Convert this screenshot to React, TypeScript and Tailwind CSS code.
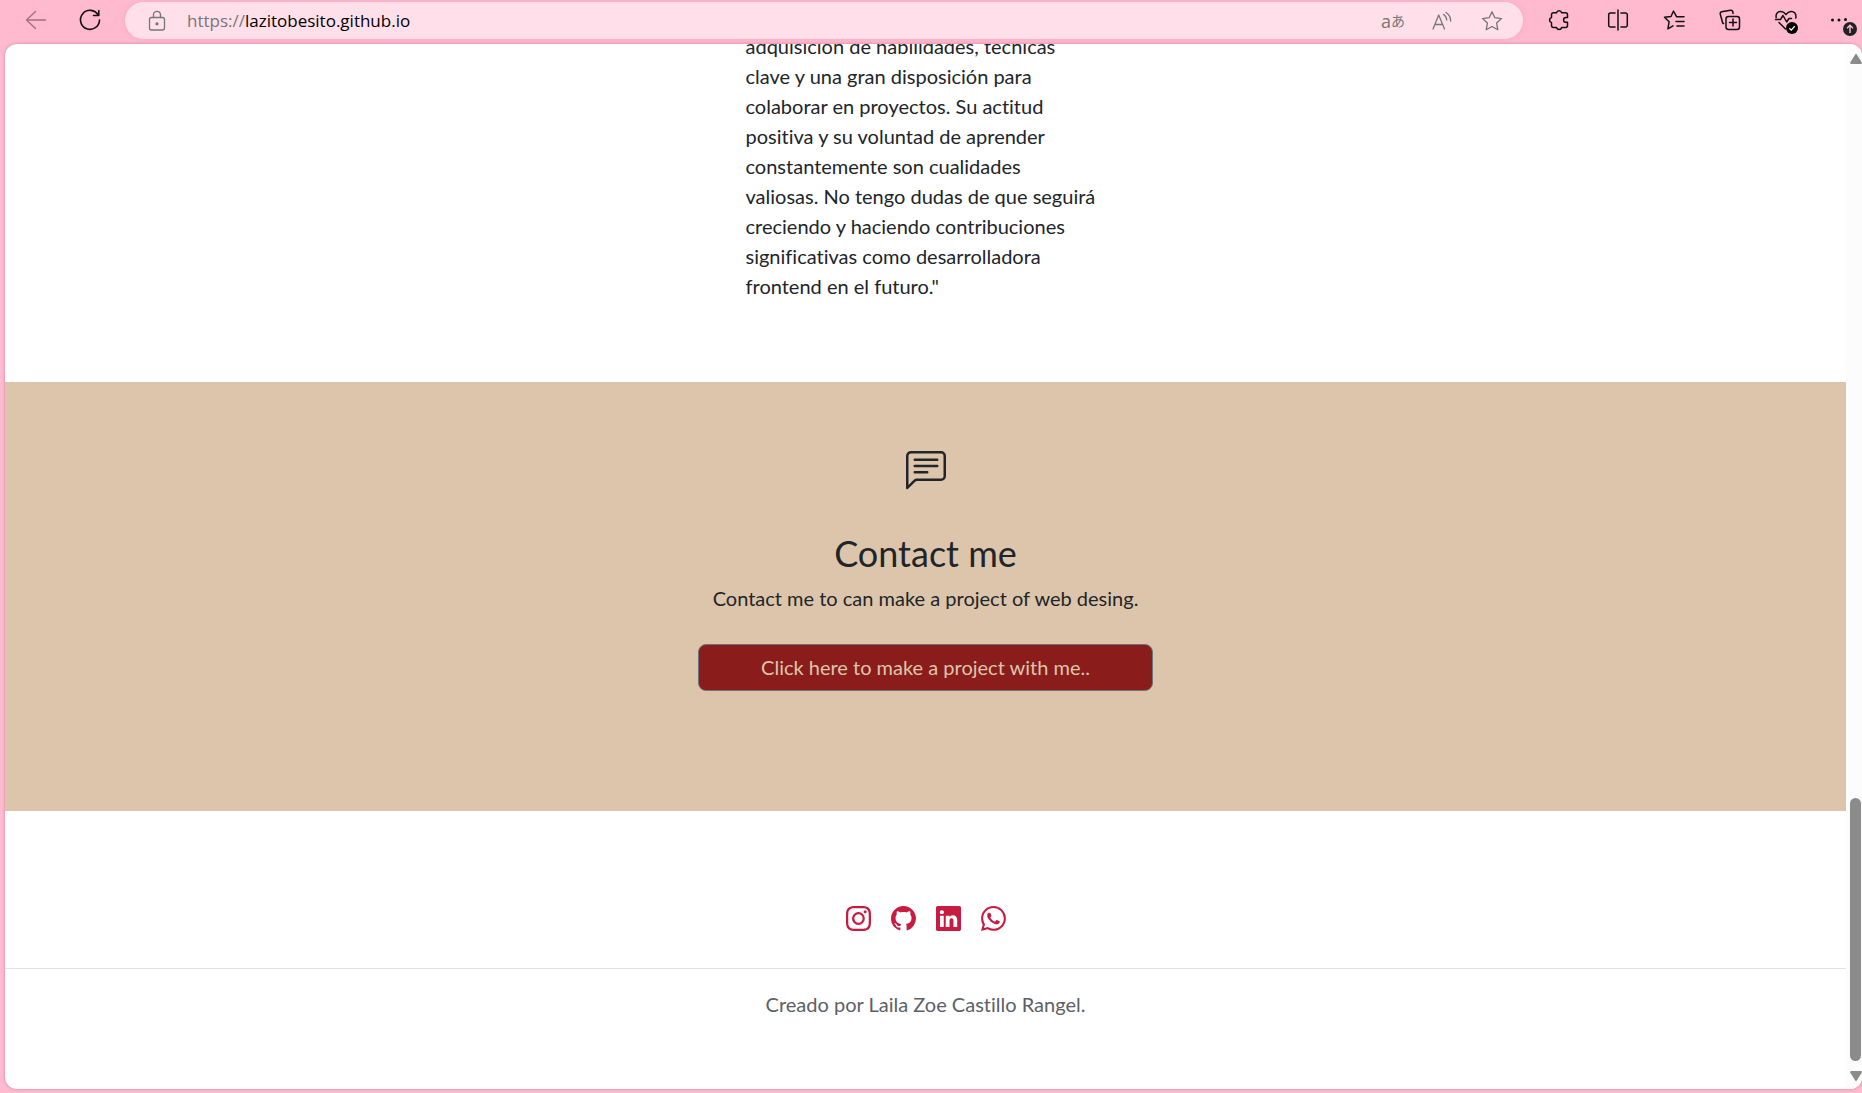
import type { ReactNode } from 'react'
import { BsChatLeftText, BsGithub, BsInstagram, BsLinkedin, BsWhatsapp } from 'react-icons/bs'

const testimonial = [
  'adquisición de habilidades, técnicas',
  'clave y una gran disposición para',
  'colaborar en proyectos. Su actitud',
  'positiva y su voluntad de aprender',
  'constantemente son cualidades',
  'valiosas. No tengo dudas de que seguirá',
  'creciendo y haciendo contribuciones',
  'significativas como desarrolladora',
  'frontend en el futuro."',
]

const socials = [
  { label: 'Instagram', icon: BsInstagram },
  { label: 'GitHub', icon: BsGithub },
  { label: 'LinkedIn', icon: BsLinkedin },
  { label: 'WhatsApp', icon: BsWhatsapp },
]

function Glyph({ children, className = 'size-6' }: { children: ReactNode; className?: string }) {
  return (
    <svg
      viewBox="0 0 24 24"
      className={className}
      fill="none"
      stroke="currentColor"
      strokeWidth="1.3"
      strokeLinecap="round"
      strokeLinejoin="round"
      aria-hidden="true"
    >
      {children}
    </svg>
  )
}

function ToolButton({ label, className = 'w-14', children }: { label: string; className?: string; children: ReactNode }) {
  return (
    <button type="button" aria-label={label} className={`${className} flex h-10 shrink-0 items-center justify-center`}>
      {children}
    </button>
  )
}

function Toolbar() {
  return (
    <header className="flex h-11 shrink-0 items-start text-[#111]">
      <div className="flex w-[125px] shrink-0 items-center pl-2">
        <ToolButton label="Atrás">
          <Glyph className="size-6 text-[#a0707f]">
            <path d="M21.5 12H2.5M11.5 3.5 2.5 12l9 8.5" />
          </Glyph>
        </ToolButton>
        <ToolButton label="Actualizar" className="w-[52px]">
          <Glyph>
            <path strokeWidth="1.6" d="M20.2 7A9.5 9.5 0 1 0 21.5 12M20.8 2.5V7.5H15.5" />
          </Glyph>
        </ToolButton>
      </div>

      <div className="mt-0.5 flex h-[37px] min-w-0 flex-1 items-center rounded-full bg-[#ffe0ea] pl-5 pr-1.5 text-[#767676] shadow-[0_0_6px_rgba(200,80,120,0.15)]">
        <Glyph>
          <rect x="4.5" y="8.500" width="15" height="12.5" rx="2" />
          <path d="M8.5 8.500V5.800a3.500 3.500 0 0 1 7 0v2.700" />
          <circle cx="12" cy="14.800" r="1" fill="currentColor" />
        </Glyph>
        <div className="relative ml-[18px] min-w-0 flex-1 font-['Open_Sans',sans-serif] text-[17px] leading-6">
          <span aria-hidden="true">https://</span>
          <span aria-hidden="true" className="text-black">lazitobesito.github.io</span>
          <input
            aria-label="Dirección"
            defaultValue="https://lazitobesito.github.io"
            className="absolute inset-0 w-full bg-transparent text-transparent outline-none"
          />
        </div>
        <ToolButton label="Traducir" className="w-12">
          <span className="flex items-center font-['Open_Sans','Noto_Sans_CJK_JP',sans-serif] leading-5">
            <span className="text-lg leading-5">a</span>
            <span className="text-sm leading-5">あ</span>
          </span>
        </ToolButton>
        <ToolButton label="Leer en voz alta" className="w-[50px]">
          <Glyph>
            <path d="M3 20 8.7 6 14.5 20M5 15.5h7.5M13.5 5.5c2 1.2 3 3 3.2 5.5M16 3.5c3 1.8 4.6 4.8 4.7 8.5" />
          </Glyph>
        </ToolButton>
        <ToolButton label="Agregar a favoritos" className="w-[50px]">
          <Glyph>
            <path d="m12 2.800 2.800 5.900 6.700.9-4.900 4.500 1.200 6.600L12 17.500l-5.800 3.200 1.200-6.600L2.500 9.600l6.700-.9Z" />
          </Glyph>
        </ToolButton>
      </div>

      <div className="flex w-[339px] shrink-0 items-center pl-3">
        <ToolButton label="Extensiones" className="w-12">
          <Glyph>
            <path
              strokeWidth="1.5"
              d="M6.500 4.800H9.500a2.700 2.700 0 0 1 5.200 0H18.500a2 2 0 0 1 2 2V9.500H19a2.300 2.300 0 0 0 0 4.800h1.500V17.500a2 2 0 0 1-2 2H14.700a2.700 2.700 0 0 1-5.200 0H6.500a2 2 0 0 1-2-2V14.700a2.700 2.700 0 0 1 0-5.200V6.800a2 2 0 0 1 2-2Z"
            />
          </Glyph>
        </ToolButton>
        <div className="ml-[7px] h-5 w-0.5 bg-[#c98fa2]" />
        <ToolButton label="Pantalla dividida">
          <Glyph>
            <path strokeWidth="1.5" d="M12 2v20M9 5H4.500A1.800 1.800 0 0 0 2.700 6.800v10.400A1.800 1.800 0 0 0 4.500 19H9M15 5h4.500a1.800 1.800 0 0 1 1.800 1.800v10.400a1.800 1.800 0 0 1-1.800 1.800H15" />
          </Glyph>
        </ToolButton>
        <ToolButton label="Favoritos">
          <Glyph>
            <path strokeWidth="1.5" d="M14.500 8.700 11.500 3 9 8.500l-6.500.8 4.600 4.500-1.200 7L11 17.800M14.500 8.700H22M14 13.500h8M15 18h7" />
          </Glyph>
        </ToolButton>
        <ToolButton label="Colecciones">
          <Glyph>
            <path strokeWidth="1.5" d="M5.500 15.500 4.700 15 2.300 6.200A2 2 0 0 1 3.700 3.800L12.500 2.200a2 2 0 0 1 2.300 1.500L15 5.500M15 11v7M11.500 14.500h7" />
            <rect strokeWidth="1.5" x="8" y="8.500" width="13.5" height="13" rx="2.5" />
          </Glyph>
        </ToolButton>
        <ToolButton label="Información esencial del explorador">
          <span className="relative">
            <Glyph>
              <path strokeWidth="1.5" d="M2.200 9.500C1.300 5.300 4.500 3 7.200 3.500 9.200 3.800 10.800 5 12 6.500c1.200-1.500 2.800-2.700 4.800-3 2.700-.5 5.900 1.800 5 6.500M1.500 11.500h5L9 7.500l3.700 6.500 2.200-3.500h2.600M5 14.500l6.500 6.500" />
            </Glyph>
            <svg viewBox="0 0 12 12" className="absolute -bottom-0.5 right-0 size-3" aria-hidden="true">
              <circle cx="6" cy="6" r="6" fill="#000" />
              <path d="m3.300 6.200 2 1.900 3.500-4" fill="none" stroke="#fff" strokeWidth="1.3" />
            </svg>
          </span>
        </ToolButton>
        <ToolButton label="Configuración y más" className="w-[50px]">
          <span className="relative">
            <Glyph>
              <g fill="currentColor" stroke="none">
                <circle cx="5.5" cy="12" r="1.5" />
                <circle cx="12" cy="12" r="1.5" />
                <circle cx="18.500" cy="11.5" r="1.5" />
              </g>
            </Glyph>
            <svg viewBox="0 0 14 14" className="absolute -bottom-1 -right-1.5 size-3.5" aria-hidden="true">
              <circle cx="7" cy="7" r="7" fill="#202124" />
              <path d="M7 11V3.500M4 6.300l3-3 3 3" fill="none" stroke="#ffbdd2" strokeWidth="1.4" />
            </svg>
          </span>
        </ToolButton>
      </div>
    </header>
  )
}

function Scrollbar() {
  return (
    <div className="flex w-4 shrink-0 flex-col items-end bg-[#fcfcfc] pt-2.5 pb-2" aria-hidden="true">
      <svg viewBox="0 0 12 10" className="h-2.5 w-3 shrink-0" fill="#8b8b8b">
        <path d="M5 .7a1.200 1.200 0 0 1 2 0L11.800 8.500Q12 10 10.800 10H1.200Q0 10 .2 8.500Z" />
      </svg>
      <div className="grow-[733]" />
      <div className="mr-px w-[11px] grow-[263] rounded-full bg-[#8b8b8b]" />
      <svg viewBox="0 0 12 10" className="mt-2.5 h-2.5 w-3 shrink-0" fill="#8b8b8b">
        <path d="M5 9.300a1.200 1.200 0 0 0 2 0L11.800 1.500Q12 0 10.800 0H1.200Q0 0 .2 1.500Z" />
      </svg>
    </div>
  )
}

export default function App() {
  return (
    <div className="flex h-screen flex-col overflow-hidden bg-[#ffbad0]">
      <Toolbar />
      <div className="mb-1 ml-[5px] flex min-h-0 flex-1 overflow-hidden rounded-xl bg-white shadow-[0_0_3px_rgba(120,40,70,0.4)]">
        <main className="min-w-0 flex-1 overflow-hidden font-['Lato',sans-serif] text-xl leading-[30px] text-[#212529] [font-variant-ligatures:none]">
          <section className="-mt-[13px] flex justify-center pb-[81px]">
            <p className="w-[360px] whitespace-nowrap">
              {testimonial.map((line) => (
                <span key={line} className="block">
                  {line}
                </span>
              ))}
            </p>
          </section>

          <section className="flex flex-col items-center bg-[#ddc5ab] pt-[69px] pb-[120px]">
            <BsChatLeftText className="size-10" aria-hidden="true" />
            <h2 className="mt-[38px] text-4xl leading-[48px]">Contact me</h2>
            <p className="mt-1.5">Contact me to can make a project of web desing.</p>
            <a
              href="#contact"
              className="mt-[31px] w-[455px] rounded-lg border border-[#6c757d] bg-[#8b1c1c] pt-[7px] pb-2 text-center text-[#ddc5ab]"
            >
              Click here to make a project with me..
            </a>
          </section>

          <footer className="pt-[95px]">
            <nav className="flex justify-center gap-5 pb-[37px] text-[#c71b41]">
              {socials.map(({ label, icon: Icon }) => (
                <a key={label} href={`#${label.toLowerCase()}`} aria-label={label}>
                  <Icon className="size-[25px]" />
                </a>
              ))}
            </nav>
            <p className="border-t border-[#dee2e6] pt-5 text-center text-[#5c6066]">
              Creado por Laila Zoe Castillo Rangel.
            </p>
          </footer>
        </main>
        <Scrollbar />
      </div>
    </div>
  )
}
